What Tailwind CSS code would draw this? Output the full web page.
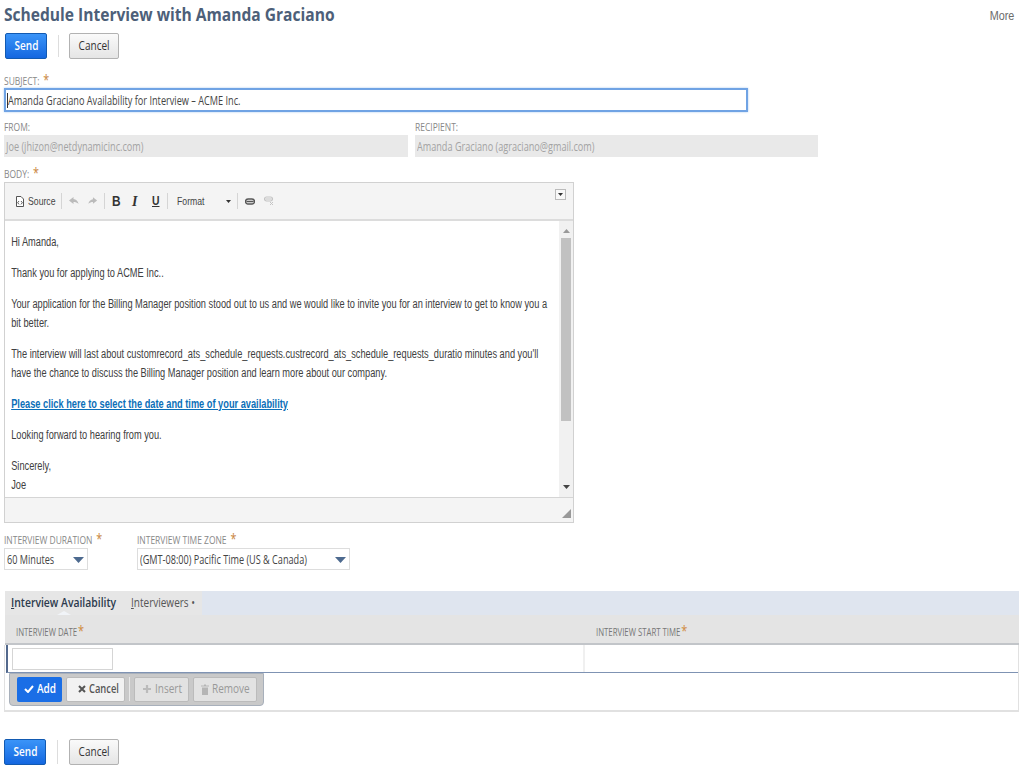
<!DOCTYPE html>
<html><head><meta charset="utf-8"><script src="https://cdn.jsdelivr.net/npm/@tailwindcss/browser@4"></script></head>
<body class="bg-white overflow-hidden">
<div class="w-[1024px] h-[768px] overflow-hidden pl-[4px] font-['Open_Sans',sans-serif] text-[#333]">
  <div class="flex justify-between h-[28px] pr-[10px]">
    <h1 class="text-[18px] leading-[28px] font-bold text-[#4d5f79] whitespace-nowrap origin-left scale-x-[0.865]">Schedule Interview with Amanda Graciano</h1>
    <span class="text-[12px] leading-[32px] font-['Liberation_Sans',sans-serif] text-[#6b6b6b] origin-right scale-x-[0.9]">More</span>
  </div>
  <div class="flex items-center h-[26px] mt-[5px]">
    <button class="w-[42px] h-[26px] ml-[1px] rounded-[2px] border border-[#125ab2] bg-gradient-to-b from-[#3a94f8] to-[#1467e0] text-white text-[13px] font-semibold"><span class="inline-block scale-x-[0.77]">Send</span></button>
    <div class="w-px h-[22px] bg-[#ddd] ml-[11px] mr-[10px]"></div>
    <button class="w-[50px] h-[26px] rounded-[2px] border border-[#b2b2b2] bg-gradient-to-b from-[#fafafa] to-[#e5e5e5] text-[#333] text-[13px]"><span class="inline-block scale-x-[0.77]">Cancel</span></button>
  </div>
  <div class="h-[14px] mt-[15px] text-[11px] leading-[12px] text-[#888] whitespace-nowrap origin-left scale-x-[0.77]">SUBJECT:<span class="text-[#c9853c] text-[14px] ml-[5px]">*</span></div>
  <div class="w-[744px] h-[24px] border-2 border-[#70a3e4] shadow-[0_0_2px_#a9c9f0] flex items-center pl-[1px] text-[12px] text-[#444]"><span class="w-px h-[15px] bg-[#333] shrink-0"></span><span class="pt-[1px] whitespace-nowrap origin-left scale-x-[0.763]">Amanda Graciano Availability for Interview – ACME Inc.</span></div>
  <div class="flex gap-[7px] mt-[9px]">
    <div class="w-[404px]">
      <div class="h-[14px] text-[11px] leading-[12px] text-[#888] origin-left scale-x-[0.77]">FROM:</div>
      <div class="h-[22px] bg-[#e9e9e9] flex items-center pl-[2px] pt-[1px] text-[12px] text-[#a3a3a3]"><span class="whitespace-nowrap origin-left scale-x-[0.76]">Joe (jhizon@netdynamicinc.com)</span></div>
    </div>
    <div class="w-[403px]">
      <div class="h-[14px] text-[11px] leading-[12px] text-[#888] origin-left scale-x-[0.77]">RECIPIENT:</div>
      <div class="h-[22px] bg-[#e9e9e9] flex items-center pl-[2px] pt-[1px] text-[12px] text-[#a3a3a3]"><span class="whitespace-nowrap origin-left scale-x-[0.76]">Amanda Graciano (agraciano@gmail.com)</span></div>
    </div>
  </div>
  <div class="h-[15px] mt-[10px] text-[11px] leading-[12px] text-[#888] whitespace-nowrap origin-left scale-x-[0.77]">BODY:<span class="text-[#c9853c] text-[14px] ml-[5px]">*</span></div>
  <div class="w-[570px] h-[341px] border border-[#d1d1d1] flex flex-col font-['Liberation_Sans',sans-serif]">
    <div class="h-[38px] shrink-0 bg-[#f4f4f4] border-b-2 border-[#dcdcdc] flex items-center relative pl-[11px] text-[11px] text-[#444]">
      <svg width="8" height="11" viewBox="0 0 8 11" class="shrink-0"><path d="M.5.5h4.500l2.500 2.500v7.500h-7z" fill="#fff" stroke="#555"/><path d="M3 5L1.700 6.700 3 8.400M5 5l1.300 1.700L5 8.400" fill="none" stroke="#333" stroke-width=".8"/></svg>
      <span class="w-[27px] ml-[4px] shrink-0 whitespace-nowrap origin-left scale-x-[0.79]">Source</span>
      <span class="w-px h-[16px] shrink-0 bg-[#d5d5d5] ml-[6px]"></span>
      <svg width="12" height="10" viewBox="0 0 12 10" class="ml-[6px] shrink-0"><path d="M5.500 1L1 4.500 5.500 8V6c2 0 3.500.5 5 2-.5-3-2.500-4.500-5-5z" fill="#bbb"/></svg>
      <svg width="11" height="10" viewBox="0 0 12 10" class="ml-[7px] shrink-0"><path d="M6.500 1L11 4.500 6.500 8V6c-2 0-3.500.5-5 2 .5-3 2.500-4.500 5-5z" fill="#bbb"/></svg>
      <span class="w-px h-[16px] shrink-0 bg-[#d5d5d5] ml-[6px]"></span>
      <span class="w-[8px] ml-[7px] shrink-0 font-bold text-[14px] text-[#333] origin-left scale-x-[0.85]">B</span>
      <span class="w-[7px] ml-[12px] shrink-0 font-['Liberation_Serif',serif] font-bold italic text-[14px] text-[#333]">I</span>
      <span class="w-[7px] ml-[13px] shrink-0 font-bold text-[13px] underline text-[#333] origin-left scale-x-[0.8]">U</span>
      <span class="w-px h-[16px] shrink-0 bg-[#d5d5d5] ml-[8px]"></span>
      <span class="w-[27px] ml-[9px] shrink-0 whitespace-nowrap origin-left scale-x-[0.79]">Format</span>
      <svg width="5" height="3" viewBox="0 0 5 3" class="ml-[22px] shrink-0"><path d="M0 0h5L2.500 3z" fill="#333"/></svg>
      <span class="w-px h-[16px] shrink-0 bg-[#d5d5d5] ml-[6px]"></span>
      <svg width="10" height="7" viewBox="0 0 10 7" class="ml-[7px] shrink-0"><path d="M3 1h4a2.500 2.500 0 010 5H3a2.500 2.500 0 010-5zM1.500 3.500h7" fill="none" stroke="#555" stroke-width="1.300"/></svg>
      <svg width="10" height="10" viewBox="0 0 10 10" class="ml-[9px] shrink-0"><path d="M2.500 1h4a2 2 0 010 4h-4a2 2 0 010-4zM1.500 3h6" fill="none" stroke="#c4c4c4" stroke-width="1.200"/><path d="M6 6l3 3M9 6L6 9" stroke="#c4c4c4"/></svg>
      <span class="absolute right-[7px] top-[6px] w-[11px] h-[11px] border border-[#bbb] bg-[#f8f8f8] flex items-center justify-center"><svg width="5" height="3" viewBox="0 0 5 3"><path d="M0 0h5L2.500 3z" fill="#333"/></svg></span>
    </div>
    <div class="flex-1 flex min-h-0 bg-white">
      <div class="flex-1 min-w-0 pl-[8px] pt-[12px] text-[12px] leading-[19px] text-[#404040] whitespace-nowrap origin-left scale-x-[0.77]">
        <p>Hi Amanda,</p>
        <p class="mt-[12px]">Thank you for applying to ACME Inc..</p>
        <p class="mt-[12px]">Your application for the Billing Manager position stood out to us and we would like to invite you for an interview to get to know you a<br>bit better.</p>
        <p class="mt-[12px]">The interview will last about customrecord_ats_schedule_requests.custrecord_ats_schedule_requests_duratio minutes and you'll<br>have the chance to discuss the Billing Manager position and learn more about our company.</p>
        <p class="mt-[12px] text-[#0b6fb8] underline font-bold">Please click here to select the date and time of your availability</p>
        <p class="mt-[12px]">Looking forward to hearing from you.</p>
        <p class="mt-[12px]">Sincerely,</p>
        <p>Joe</p>
      </div>
      <div class="w-[14px] shrink-0 bg-[#f1f1f1] flex flex-col items-center">
        <svg width="7" height="4" viewBox="0 0 7 4" class="mt-[8px]"><path d="M3.500 0L7 4H0z" fill="#999"/></svg>
        <div class="w-[10px] h-[183px] bg-[#c1c1c1] mt-[5px]"></div>
        <svg width="7" height="4" viewBox="0 0 7 4" class="mt-auto mb-[8px]"><path d="M0 0h7L3.500 4z" fill="#444"/></svg>
      </div>
    </div>
    <div class="h-[25px] shrink-0 bg-[#f4f4f4] border-t border-[#d5d5d5] flex justify-end items-end pr-[2px] pb-[4px]">
      <svg width="9" height="9" viewBox="0 0 9 9"><path d="M9 0v9H0z" fill="#999"/></svg>
    </div>
  </div>
  <div class="flex mt-[10px]">
    <div class="w-[133px]">
      <div class="h-[15px] text-[11px] leading-[12px] text-[#888] whitespace-nowrap origin-left scale-x-[0.77]">INTERVIEW DURATION<span class="text-[#c9853c] text-[14px] ml-[5px]">*</span></div>
      <div class="w-[84px] h-[22px] border border-[#ddd] flex items-center justify-between pl-[2px] pt-[1px] pr-[3px] text-[12px] text-[#444]"><span class="w-[60px] whitespace-nowrap origin-left scale-x-[0.76]">60 Minutes</span><svg width="11" height="6" viewBox="0 0 11 6" class="shrink-0"><path d="M0 0h11L5.500 6z" fill="#4d6a8f"/></svg></div>
    </div>
    <div>
      <div class="h-[15px] text-[11px] leading-[12px] text-[#888] whitespace-nowrap origin-left scale-x-[0.77]">INTERVIEW TIME ZONE<span class="text-[#c9853c] text-[14px] ml-[5px]">*</span></div>
      <div class="w-[213px] h-[22px] border border-[#ddd] flex items-center justify-between pl-[2px] pt-[1px] pr-[3px] text-[12px] text-[#444]"><span class="w-[190px] whitespace-nowrap origin-left scale-x-[0.76]">(GMT-08:00) Pacific Time (US &amp; Canada)</span><svg width="11" height="6" viewBox="0 0 11 6" class="shrink-0"><path d="M0 0h11L5.500 6z" fill="#4d6a8f"/></svg></div>
    </div>
  </div>
  <div class="w-[1014px] h-[24px] ml-[1px] mt-[21px] bg-[#dfe5ef] flex">
    <div class="w-[197px] h-[24px] bg-[#e6e6e6] flex items-center pl-[6px] relative">
      <span class="w-[120px] shrink-0 text-[13px] font-semibold text-[#2c3a4d] whitespace-nowrap origin-left scale-x-[0.8]"><span class="underline">I</span>nterview Availability</span>
      <span class="text-[13px] text-[#555] whitespace-nowrap origin-left scale-x-[0.77]"><span class="underline">I</span>nterviewers •</span>
      <span class="absolute left-[52px] bottom-0 w-0 h-0 border-x-[7px] border-x-transparent border-b-[4px] border-b-[#f1f4f8]"></span>
    </div>
  </div>
  <div class="w-[1014px] h-[30px] ml-[1px] bg-[#e4e4e4] border-b-2 border-[#c2c5c9] flex items-center pt-[2px] text-[10px] text-[#777]">
    <div class="w-[591px] pl-[11px] whitespace-nowrap"><span class="inline-block origin-left scale-x-[0.78]">INTERVIEW DATE<span class="text-[#d08a3c] text-[14px] ml-[1px]">*</span></span></div>
    <div class="whitespace-nowrap"><span class="inline-block origin-left scale-x-[0.78]">INTERVIEW START TIME<span class="text-[#d08a3c] text-[14px] ml-[1px]">*</span></span></div>
  </div>
  <div class="w-[1015px] h-[67px] border-x border-b-2 border-[#e1e1e1] relative">
    <div class="h-[28px] ml-[1px] border-b border-b-[#7f93b3] border-l-2 border-l-[#52688c] flex">
      <div class="w-[577px] border-r-2 border-[#f0f0f0] pl-[4px] pt-[3px]"><div class="w-[101px] h-[22px] border border-[#d5d5d5] bg-white"></div></div>
    </div>
    <div class="absolute left-[4px] top-[28px] w-[255px] h-[33px] bg-[#c9c9c9] border border-[#a8b0bb] rounded-b-[4px] flex items-center pl-[7px] pb-[1px] text-[13px]">
      <button class="w-[45px] h-[25px] shrink-0 rounded-[2px] bg-[#1a6ee6] text-white font-semibold flex items-center justify-center"><svg width="10" height="8" viewBox="0 0 10 8" class="shrink-0 mr-[3px]"><path d="M1 4l3 3 5-6" fill="none" stroke="#fff" stroke-width="2"/></svg><span class="w-[18px] whitespace-nowrap origin-left scale-x-[0.77]">Add</span></button>
      <button class="w-[59px] h-[25px] ml-[4px] shrink-0 rounded-[2px] bg-[#f2f2f2] border border-[#bbb] text-[#555] font-semibold flex items-center pl-[11px]"><svg width="8" height="8" viewBox="0 0 8 8" class="shrink-0 mr-[3px]"><path d="M1 1l6 6M7 1L1 7" stroke="#555" stroke-width="2"/></svg><span class="w-[29px] whitespace-nowrap origin-left scale-x-[0.72]">Cancel</span></button>
      <span class="w-px h-[24px] shrink-0 bg-[#e8e8e8] ml-[4px]"></span>
      <button class="w-[55px] h-[25px] ml-[4px] shrink-0 rounded-[2px] bg-[#e2e2e2] border border-[#bbb] text-[#999] flex items-center justify-center"><svg width="8" height="8" viewBox="0 0 8 8" class="shrink-0 mr-[4px]"><path d="M4 0v8M0 4h8" stroke="#bbb" stroke-width="2.200"/></svg><span class="w-[25px] whitespace-nowrap origin-left scale-x-[0.77]">Insert</span></button>
      <button class="w-[64px] h-[25px] ml-[4px] shrink-0 rounded-[2px] bg-[#e2e2e2] border border-[#bbb] text-[#999] flex items-center justify-center"><svg width="8" height="11" viewBox="0 0 8 11" class="shrink-0 mr-[3px]"><path d="M0 1.500h8v1H0zM1 3.500h6V11H1zM3 .5h2v1H3z" fill="#b5b5b5"/></svg><span class="w-[37px] whitespace-nowrap origin-left scale-x-[0.77]">Remove</span></button>
    </div>
  </div>
  <div class="flex items-center h-[26px] mt-[27px]">
    <button class="w-[42px] h-[26px] rounded-[2px] border border-[#125ab2] bg-gradient-to-b from-[#3a94f8] to-[#1467e0] text-white text-[13px] font-semibold"><span class="inline-block scale-x-[0.77]">Send</span></button>
    <div class="w-px h-[24px] bg-[#ddd] ml-[11px] mr-[11px]"></div>
    <button class="w-[50px] h-[26px] rounded-[2px] border border-[#b2b2b2] bg-gradient-to-b from-[#fafafa] to-[#e5e5e5] text-[#333] text-[13px]"><span class="inline-block scale-x-[0.77]">Cancel</span></button>
  </div>
</div>
</body></html>
